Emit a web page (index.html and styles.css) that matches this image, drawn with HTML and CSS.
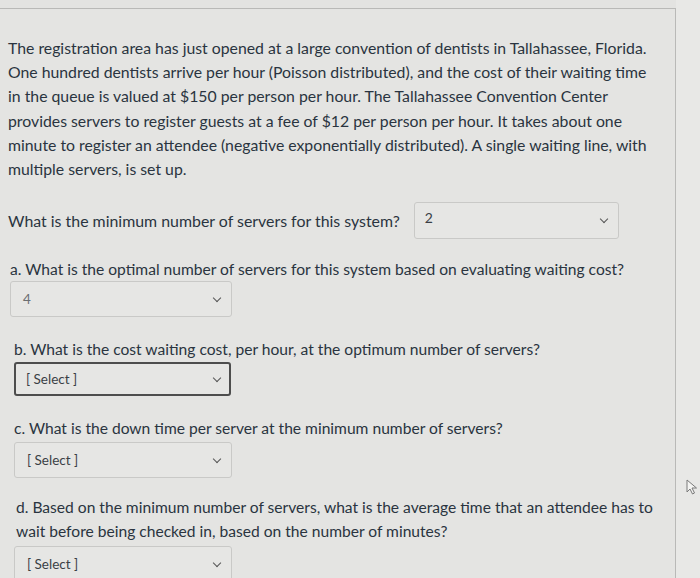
FILE: index.html
```html
<!DOCTYPE html>
<html>
<head>
<meta charset="utf-8">
<link rel="stylesheet" href="styles.css">
</head>
<body>
<div class="page">
  <div class="card">
    <p class="intro">The registration area has just opened at a large convention of dentists in Tallahassee, Florida. One hundred dentists arrive per hour (Poisson distributed), and the cost of their waiting time in the queue is valued at $150 per person per hour. The Tallahassee Convention Center provides servers to register guests at a fee of $12 per person per hour. It takes about one minute to register an attendee (negative exponentially distributed). A single waiting line, with multiple servers, is set up.</p>

    <div class="inline-q">
      <span>What is the minimum number of servers for this system?</span>
      <div class="sel sel-wide"><span class="val">2</span><span class="chev"></span></div>
    </div>

    <div class="q q-a">
      <p>a. What is the optimal number of servers for this system based on evaluating waiting cost?</p>
      <div class="sel sel-a"><span class="val light">4</span><span class="chev"></span></div>
    </div>

    <div class="q q-b">
      <p>b. What is the cost waiting cost, per hour, at the optimum number of servers?</p>
      <div class="sel focus"><span class="val">[ Select ]</span><span class="chev"></span></div>
    </div>

    <div class="q q-c">
      <p>c. What is the down time per server at the minimum number of servers?</p>
      <div class="sel"><span class="val">[ Select ]</span><span class="chev"></span></div>
    </div>

    <div class="q q-d">
      <p>d. Based on the minimum number of servers, what is the average time that an attendee has to wait before being checked in, based on the number of minutes?</p>
      <div class="sel"><span class="val">[ Select ]</span><span class="chev"></span></div>
    </div>
  </div>
  <div class="side">
    <svg class="cursor" width="12" height="16" viewBox="0 0 12 16"><path d="M1 1 L1 13 L4 10 L6.5 15 L8.5 14 L6 9 L10.5 9 Z" fill="#f4f4f2" stroke="#7a7a7a" stroke-width="1"/></svg>
  </div>
</div>
</body>
</html>
```
FILE: styles.css
```css
html, body {
  margin: 0;
  padding: 0;
  background: #e3e3e1;
}
.page {
  display: flex;
  width: 700px;
  height: 578px;
  overflow: hidden;
  font-family: Lato, "Noto Sans", sans-serif;
  color: #2a3440;
}
.card {
  flex: none;
  width: 676px;
  margin-top: 8px;
  border-top: 1px solid #b9b9b7;
  border-right: 1px solid #b9b9b7;
  background: #e4e4e2;
  padding: 27px 0 0 8px;
  box-sizing: border-box;
}
.side {
  flex: 1;
  background: #e8e8e6;
  position: relative;
}
.cursor {
  position: absolute;
  left: 10px;
  top: 479px;
}
.intro {
  margin: 0;
  font-size: 15.8px;
  line-height: 24.2px;
  width: 650px;
}
.inline-q {
  display: flex;
  align-items: center;
  gap: 14px;
  margin-top: 21px;
  font-size: 15.9px;
}
.q {
  font-size: 15.6px;
}
.q p {
  margin: 0;
  line-height: 24px;
}
.sel {
  position: relative;
  width: 218px;
  height: 36px;
  box-sizing: border-box;
  border: 1px solid #c9c9c7;
  border-radius: 3px;
  background: #e6e6e4;
  display: flex;
  align-items: center;
  padding-left: 12px;
  font-size: 13.5px;
  margin-left: 6px;
}
.sel-wide {
  width: 205px;
  margin-left: 0;
  padding-left: 10px;
  height: 37px;
  align-items: flex-start;
  padding-top: 6px;
  font-size: 14px;
}
.val { color: #3a3f45; }
.val.light { color: #6a6e72; }
.chev {
  position: absolute;
  right: 11px;
  top: 13px;
  width: 5px;
  height: 5px;
  border-right: 1.6px solid #555;
  border-bottom: 1.6px solid #555;
  transform: rotate(45deg);
}
.q-a { margin-top: 18px; }
.q-a p { margin-left: 2px; }
.q-a .sel { margin-left: 2px; margin-top: 0; width: 222px; }
.q-b { margin-top: 20px; }
.q-b p { margin-left: 6px; }
.sel.focus {
  margin-top: 1px;
  border: 2px solid #4d4d4d;
  height: 34px;
  width: 217px;
  padding-left: 10px;
}
.sel.focus .chev { top: 11px; right: 9px; }
.q-c { margin-top: 20px; }
.q-c p { margin-left: 6px; }
.q-c .sel { margin-top: 2px; }
.q-d { margin-top: 17px; }
.q-d p { margin-left: 8px; width: 650px; }
.q-d .sel { margin-top: 3px; }
```
